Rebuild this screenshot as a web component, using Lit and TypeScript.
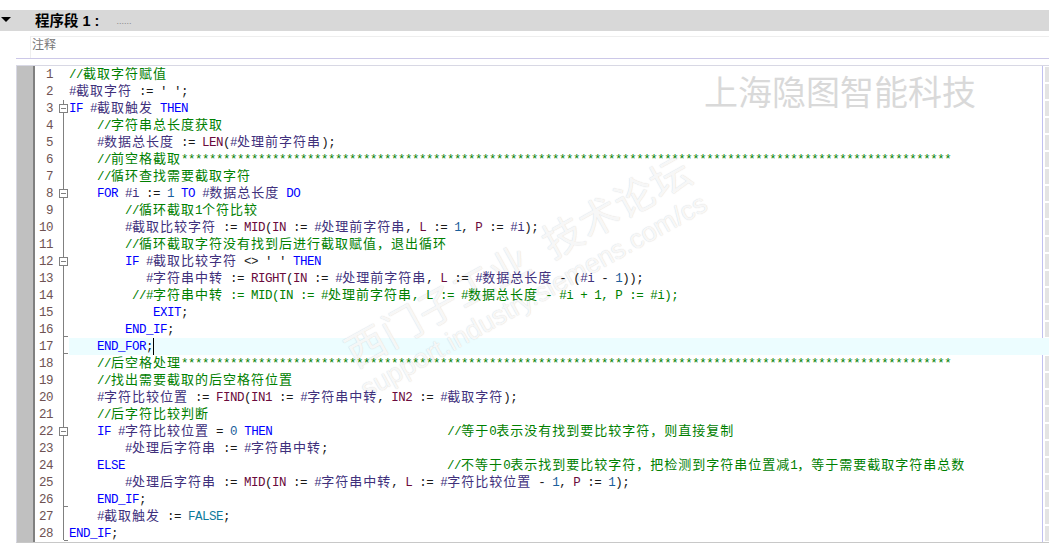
import { LitElement, html, css, svg } from "lit";
import { customElement } from "lit/decorators.js";

const stars = "*".repeat(110);
const SOURCE: string[] = [
  "//截取字符赋值",
  "#截取字符 := ' ';",
  "IF #截取触发 THEN",
  "    //字符串总长度获取",
  "    #数据总长度 := LEN(#处理前字符串);",
  "    //前空格截取" + stars,
  "    //循环查找需要截取字符",
  "    FOR #i := 1 TO #数据总长度 DO",
  "        //循环截取1个符比较",
  "        #截取比较字符 := MID(IN := #处理前字符串, L := 1, P := #i);",
  "        //循环截取字符没有找到后进行截取赋值\uff0c退出循环",
  "        IF #截取比较字符 <> ' ' THEN",
  "           #字符串中转 := RIGHT(IN := #处理前字符串, L := #数据总长度 - (#i - 1));",
  "         //#字符串中转 := MID(IN := #处理前字符串, L := #数据总长度 - #i + 1, P := #i);",
  "            EXIT;",
  "        END_IF;",
  "    END_FOR;",
  "    //后空格处理" + stars,
  "    //找出需要截取的后空格符位置",
  "    #字符比较位置 := FIND(IN1 := #字符串中转, IN2 := #截取字符);",
  "    //后字符比较判断",
  "    IF #字符比较位置 = 0 THEN" + " ".repeat(25) + "//等于0表示没有找到要比较字符\uff0c则直接复制",
  "        #处理后字符串 := #字符串中转;",
  "    ELSE" + " ".repeat(46) + "//不等于0表示找到要比较字符\uff0c把检测到字符串位置减1\uff0c等于需要截取字符串总数",
  "        #处理后字符串 := MID(IN := #字符串中转, L := #字符比较位置 - 1, P := 1);",
  "    END_IF;",
  "    #截取触发 := FALSE;",
  "END_IF;",
];

const FOLD_BOX = new Set([3, 8, 12, 22]);
const FOLD_END = new Set([16, 17, 26, 28]);

const TOKEN =
  /(\/\/.*$)|(#[^\s,;:()]+)|\b(IF|THEN|FOR|TO|DO|END_FOR|END_IF|ELSE|EXIT)\b|\b(FALSE)\b|\b(LEN|MID|RIGHT|FIND|IN1|IN2|IN|L|P)\b|\b(\d+)\b/g;
const CLASSES = ["cm", "var", "kw", "lit", "fn", "num"];

function cjk(text: string) {
  return text
    .split(/([\u3000-\u9fff\uff00-\uffef]+)/)
    .map((part, i) => (i % 2 ? html`<span class="han">${part}</span>` : part));
}

function highlight(line: string) {
  const out: unknown[] = [];
  let last = 0;
  for (const m of line.matchAll(TOKEN)) {
    const at = m.index ?? 0;
    if (at > last) out.push(cjk(line.slice(last, at)));
    const group = m.slice(1).findIndex((g) => g !== undefined);
    out.push(html`<span class=${CLASSES[group]}>${cjk(m[0])}</span>`);
    last = at + m[0].length;
  }
  if (last < line.length) out.push(cjk(line.slice(last)));
  return out;
}

function fold(n: number) {
  if (n < 3) return svg``;
  const end = n === 28 ? 15 : 17;
  return svg`
    <line x1="4.5" y1="0" x2="4.5" y2=${end} />
    ${FOLD_END.has(n) ? svg`<line x1="4.5" y1="15.5" x2="9" y2="15.5" />` : ""}
    ${FOLD_BOX.has(n)
      ? svg`<rect x="0.5" y="4.5" width="8" height="8" fill="#fff" /><line x1="2" y1="8.5" x2="7" y2="8.5" />`
      : ""}`;
}

@customElement("app-root")
export class AppRoot extends LitElement {
  static styles = css`
    :host {
      display: block;
      width: 1049px;
      height: 549px;
      overflow: hidden;
      background: #fff;
      padding-top: 10px;
      box-sizing: border-box;
      font-family: "Liberation Sans", "Noto Sans CJK SC", sans-serif;
    }
    .bar {
      height: 21px;
      box-sizing: border-box;
      background: #d8d8d8;
      display: flex;
      align-items: center;
      padding: 0 0 3px 1px;
    }
    .arrow {
      width: 0;
      height: 0;
      border-left: 5px solid transparent;
      border-right: 5px solid transparent;
      border-top: 5px solid #000;
      margin-right: 24px;
    }
    .title {
      font-size: 14.5px;
      font-weight: 700;
      color: #000;
      white-space: pre;
    }
    .dots {
      margin: 4px 0 0 17px;
      font-size: 9px;
      color: #888;
    }
    .note {
      margin: 5px 0 0 30px;
      height: 21px;
      border-left: 1px solid #eee;
      border-top: 1px solid #eee;
      padding-left: 1px;
      font-size: 12px;
      line-height: 17px;
      color: #777;
    }
    .rule {
      margin-left: 16px;
      height: 1px;
      background: #ccc8e8;
    }
    .editor {
      position: relative;
      margin: 6px 0 0 16px;
      height: 478px;
      box-sizing: border-box;
      border-top: 1px solid #d8d8e4;
      border-bottom: 1px solid #c8c8c8;
      border-left: 1px solid #d8d8e4;
      display: flex;
    }
    .lines {
      flex: 1;
      min-width: 0;
    }
    .row {
      display: flex;
      height: 17px;
      line-height: 19px;
      font-family: "Liberation Mono", "Noto Sans CJK SC", monospace;
      font-size: 12.5px;
      letter-spacing: -0.5px;
      white-space: pre;
      color: #1a1a1a;
    }
    .gut {
      width: 16px;
      flex: none;
      background: #c0c0c0;
      border-right: 2px solid #808080;
    }
    .no {
      width: 18px;
      flex: none;
      text-align: right;
      color: #6e5252;
    }
    .fold {
      flex: none;
      width: 10px;
      height: 17px;
      margin-left: 6px;
      stroke: #808080;
      fill: none;
      shape-rendering: crispEdges;
    }
    .code {
      flex: 1;
      position: relative;
      z-index: 2;
      display: flex;
    }
    .txt {
      display: block;
    }
    .caret {
      width: 1px;
      height: 17px;
      background: #000;
      flex: none;
    }
    .hl {
      position: absolute;
      left: 52px;
      right: 0;
      top: 272px;
      height: 17px;
      background: #ecfdff;
    }
    .han {
      font-family: "Noto Sans CJK SC", sans-serif;
      font-size: 13px;
      line-height: 0;
      letter-spacing: 1px;
    }
    .cm {
      color: #008000;
    }
    .kw {
      color: #0000ff;
    }
    .var {
      color: #40307c;
    }
    .fn {
      color: #6a0a3c;
    }
    .num {
      color: #1a5f9c;
    }
    .lit {
      color: #0f7a9c;
    }
    .side {
      flex: none;
      width: 4px;
      border-left: 1px solid #c0c0f0;
      padding: 1px 0 0 2px;
      display: flex;
      flex-direction: column;
      gap: 2px;
    }
    .side i {
      display: block;
      height: 15px;
      background: #e4e4e4;
    }
    .logo {
      position: absolute;
      z-index: 3;
      left: 687px;
      top: 5px;
      font-family: "Noto Sans CJK SC", sans-serif;
      font-size: 34px;
      line-height: 40px;
      color: #d9d9d9;
      white-space: pre;
    }
    .mark {
      position: absolute;
      z-index: 1;
      transform-origin: 0 100%;
      transform: rotate(-29deg);
      white-space: pre;
      color: rgba(255, 255, 255, 0.85);
      text-shadow: 0 0 1px rgba(130, 130, 130, 0.4);
      font-family: "Noto Sans CJK SC", sans-serif;
    }
    .mark.cn {
      left: 341px;
      top: 263px;
      font-size: 40px;
      line-height: 44px;
      letter-spacing: 1px;
    }
    .mark.en {
      left: 353px;
      top: 308px;
      font-family: "Liberation Sans", sans-serif;
      font-size: 27px;
      line-height: 30px;
    }
  `;

  render() {
    return html`
      <div class="bar">
        <span class="arrow"></span>
        <span class="title">程序段 1 :</span>
        <span class="dots">......</span>
      </div>
      <div class="note">注释</div>
      <div class="rule"></div>
      <div class="editor">
        <div class="hl"></div>
        <div class="mark cn">西门子工业  技术论坛</div>
        <div class="mark en">support.industry.siemens.com/cs</div>
        <div class="logo">上海隐图智能科技</div>
        <div class="lines">
          ${SOURCE.map((line, i) => {
            const n = i + 1;
            return html`<div class="row">
              <span class="gut"></span><span class="no">${n}</span
              ><svg class="fold" viewBox="0 0 10 17">${fold(n)}</svg
              ><span class="code"
                ><span class="txt">${highlight(line)}</span
                >${n === 17 ? html`<span class="caret"></span>` : ""}</span
              >
            </div>`;
          })}
        </div>
        <div class="side">${SOURCE.map(() => html`<i></i>`)}</div>
      </div>
    `;
  }
}
